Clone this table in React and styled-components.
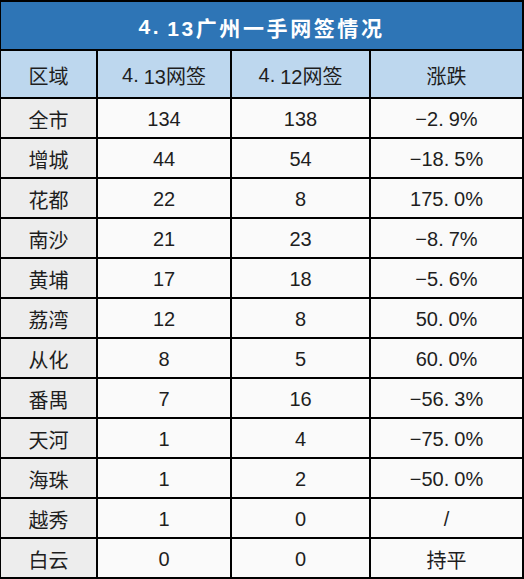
import React from 'react';
import styled, { createGlobalStyle } from 'styled-components';

const GlobalStyle = createGlobalStyle`
  body {
    margin: 0;
    background: #ffffff;
  }
`;

const Table = styled.div`
  display: grid;
  grid-template-columns: 95px 132px 137px 151px;
  grid-template-rows: 47px 46px repeat(12, 38px);
  gap: 2px;
  width: 524px;
  box-sizing: border-box;
  padding: 2px 2px 2px 1px;
  background: #000;
  font-family: "Liberation Sans", "Noto Sans CJK SC", sans-serif;
  color: #1e1e1e;
`;

const Title = styled.div`
  grid-column: 1 / -1;
  background: #2e75b6;
  color: #fff;
  font-size: 21px;
  font-weight: bold;
  letter-spacing: 2.6px;
  padding-top: 3px;
  display: flex;
  align-items: center;
  justify-content: center;
`;

const Cell = styled.div`
  display: flex;
  align-items: center;
  justify-content: center;
  font-size: 20px;
  padding-top: 2px;
  background: ${p => (p.$head ? '#bdd7ee' : p.$first ? '#ededed' : '#fafafa')};
`;

const Dot = styled.span`
  margin-right: ${p => p.$gap || 5}px;
`;

// Excel-style wide period: "4. 13"
const Num = ({ text, gap }) => {
  const i = text.indexOf('.');
  if (i < 0) return text;
  return (
    <>
      {text.slice(0, i)}
      <Dot $gap={gap}>.</Dot>
      {text.slice(i + 1)}
    </>
  );
};

const rows = [
  ['全市', '134', '138', '−2.9%'],
  ['增城', '44', '54', '−18.5%'],
  ['花都', '22', '8', '175.0%'],
  ['南沙', '21', '23', '−8.7%'],
  ['黄埔', '17', '18', '−5.6%'],
  ['荔湾', '12', '8', '50.0%'],
  ['从化', '8', '5', '60.0%'],
  ['番禺', '7', '16', '−56.3%'],
  ['天河', '1', '4', '−75.0%'],
  ['海珠', '1', '2', '−50.0%'],
  ['越秀', '1', '0', '/'],
  ['白云', '0', '0', '持平'],
];

const head = ['区域', '4.13网签', '4.12网签', '涨跌'];

export default function App() {
  return (
    <>
      <GlobalStyle />
      <Table>
        <Title>
          <Num text="4.13广州一手网签情况" gap={6} />
        </Title>
        {head.map(h => (
          <Cell key={h} $head>
            <Num text={h} />
          </Cell>
        ))}
        {rows.map(r =>
          r.map((v, i) => (
            <Cell key={r[0] + i} $first={i === 0}>
              <Num text={v} />
            </Cell>
          ))
        )}
      </Table>
    </>
  );
}
